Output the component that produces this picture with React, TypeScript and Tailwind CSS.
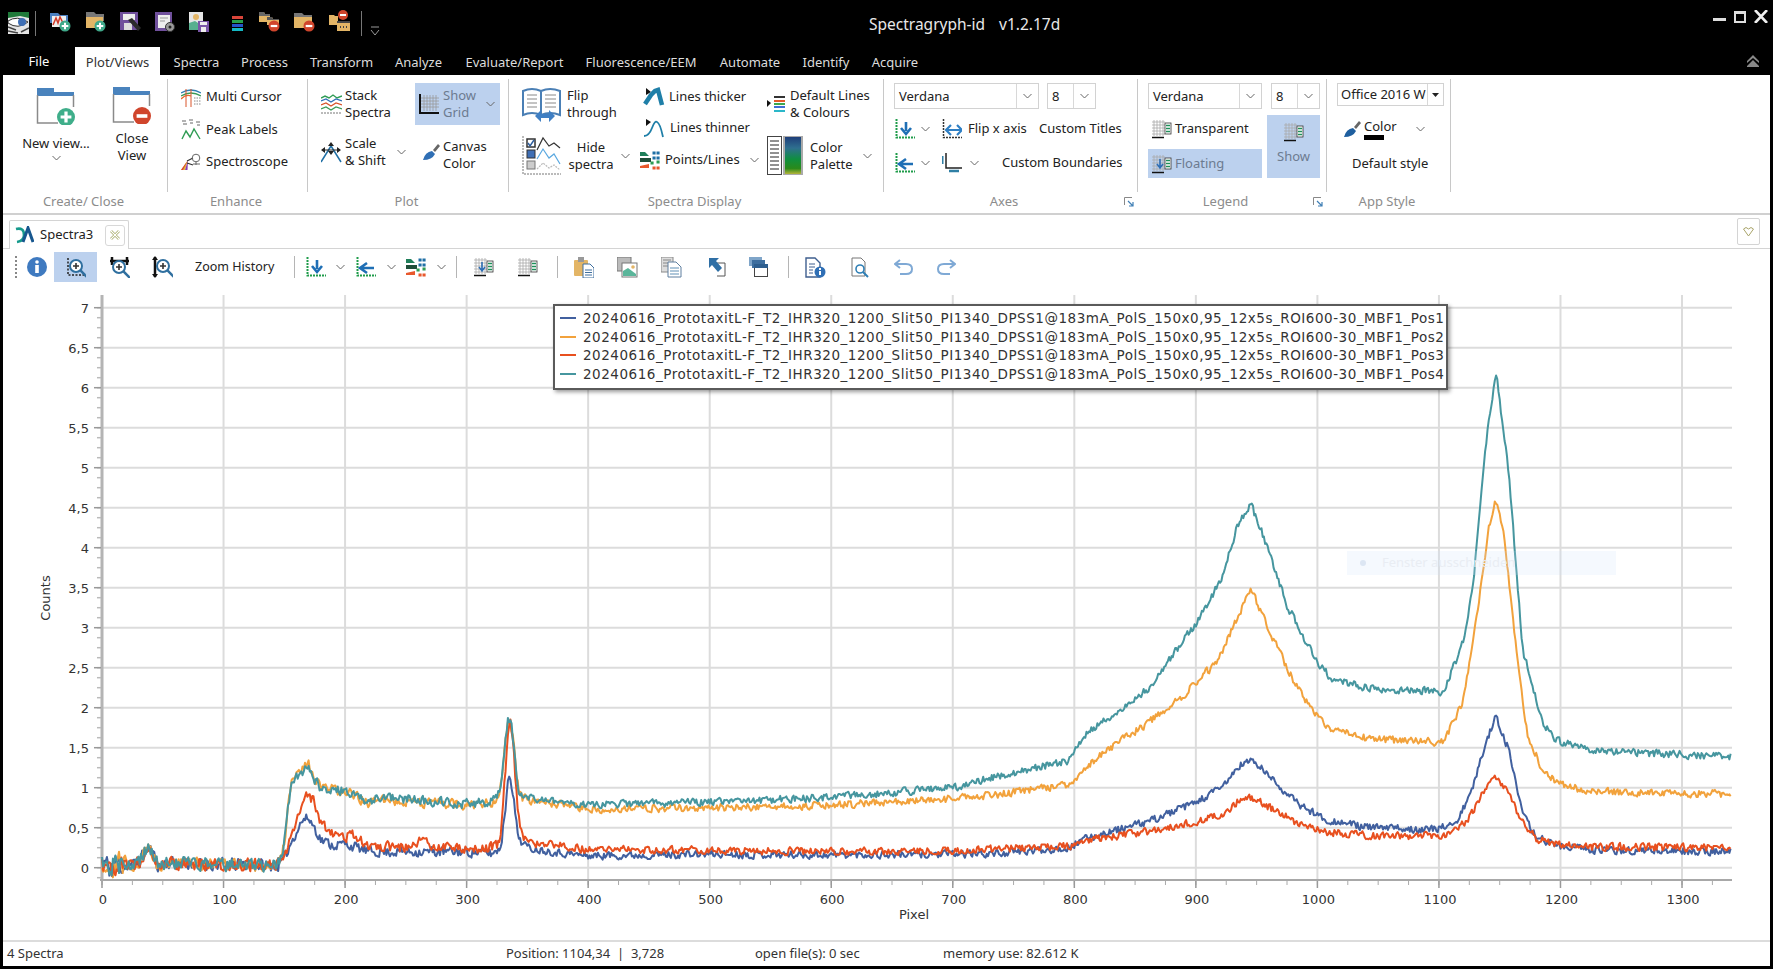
import type { ReactNode } from "react";

const S = ({ w, h, children }: { w: number; h: number; children?: ReactNode }) => (
  <svg width={w} height={h} viewBox={`0 0 ${w} ${h}`} className="block shrink-0">
    {children}
  </svg>
);

const Chevron = ({ color = "#666" }: { color?: string }) => (
  <S w={9} h={6}>
    <path d="M0.5 1 L4.5 5 L8.5 1" fill="none" stroke={color} strokeWidth="1" />
  </S>
);

/* ---------- quick access icons ---------- */
const Plus = ({ cx, cy, r, fill = "#3fa98a" }: { cx: number; cy: number; r: number; fill?: string }) => (
  <g>
    <circle cx={cx} cy={cy} r={r} fill={fill} />
    <path d={`M${cx - r * 0.6} ${cy}H${cx + r * 0.6}M${cx} ${cy - r * 0.6}V${cy + r * 0.6}`} stroke="#fff" strokeWidth={r * 0.36} />
  </g>
);
const Minus = ({ cx, cy, r }: { cx: number; cy: number; r: number }) => (
  <g>
    <circle cx={cx} cy={cy} r={r} fill="#d0452c" />
    <path d={`M${cx - r * 0.6} ${cy}H${cx + r * 0.6}`} stroke="#fff" strokeWidth={r * 0.4} />
  </g>
);

const QEye = () => (
  <S w={21} h={22}>
    <rect x="0" y="0" width="21" height="22" fill="#e6e6e6" />
    <path d="M0 0H21V6L12 4L0 6Z" fill="#1f7a3a" />
    <path d="M0 9Q9 3 20 10Q10 18 0 11Z" fill="#fff" stroke="#333" />
    <circle cx="14" cy="10" r="4" fill="#3f6fb5" />
    <path d="M0 15L8 18M0 19L10 21M13 20L21 16" stroke="#444" strokeWidth="1.5" />
  </S>
);
const QNewSpec = () => (
  <S w={22} h={21}>
    <path d="M0 2H8L10 4H18V12H0Z" fill="#4a7fc0" />
    <rect x="2" y="5" width="14" height="11" fill="#eee" />
    <path d="M3 14L6 7L8 12L10 6L13 12" fill="none" stroke="#d03a2a" strokeWidth="1.5" />
    <Plus cx={15} cy={15} r={5.5} />
  </S>
);
const QFolderAdd = () => (
  <S w={22} h={21}>
    <path d="M1 1H9L11 3H19V10H1Z" fill="#777" />
    <path d="M1 6H18V17H1Z" fill="#e3b566" />
    <Plus cx={15} cy={15} r={5.5} />
  </S>
);
const QFloppyPen = () => (
  <S w={22} h={22}>
    <rect x="0" y="1" width="18" height="18" fill="#70509c" />
    <rect x="3" y="3" width="12" height="6" fill="#eee" />
    <rect x="4" y="12" width="8" height="7" fill="#ddd" />
    <path d="M8 9L12 7L21 17L18 20Z" fill="#2b2b2b" />
  </S>
);
const QDocGear = () => (
  <S w={21} h={22}>
    <rect x="0" y="1" width="17" height="19" fill="#70509c" />
    <rect x="3" y="4" width="12" height="13" fill="#eee" />
    <path d="M5 7H13M5 10H10" stroke="#999" />
    <circle cx="15" cy="16" r="4.5" fill="#999" stroke="#333" strokeWidth="1" />
    <circle cx="15" cy="16" r="1.5" fill="#222" />
  </S>
);
const QPicFloppy = () => (
  <S w={20} h={21}>
    <rect x="0" y="1" width="14" height="18" fill="#e6e6e6" />
    <circle cx="7" cy="6" r="3" fill="#e3b566" />
    <path d="M0 19V12L6 10L12 14V19Z" fill="#57b08f" />
    <rect x="9" y="10" width="11" height="11" fill="#7a56a8" />
    <rect x="11" y="11" width="7" height="3" fill="#eee" />
    <rect x="12" y="16" width="5" height="5" fill="#eee" />
  </S>
);
const QBars = () => (
  <S w={11} h={15}>
    <rect y="0" width="11" height="3" fill="#d9453a" />
    <rect y="4" width="11" height="3" fill="#27a04a" />
    <rect y="8" width="11" height="3" fill="#2453c9" />
    <rect y="12" width="11" height="3" fill="#14b8c4" />
  </S>
);
const QFoldersMinus = () => (
  <S w={21} h={21}>
    <path d="M0 1H5L6 3H11V11H0Z" fill="#e3b566" />
    <path d="M0 1H5L6 3H11V5H0Z" fill="#666" />
    <path d="M8 6H13L14 8H20V14H8Z" fill="#e3b566" />
    <path d="M8 6H13L14 8H20V9H8Z" fill="#555" />
    <Minus cx={15} cy={15} r={5.5} />
  </S>
);
const QFolderMinus = () => (
  <S w={21} h={21}>
    <path d="M0 2H8L10 4H18V9H0Z" fill="#777" />
    <path d="M0 6H18V17H0Z" fill="#e3b566" />
    <Minus cx={15} cy={15} r={5.5} />
  </S>
);
const QBoxMinus = () => (
  <S w={21} h={22}>
    <path d="M0 5H5L6 6H9V15H0Z" fill="#e3b566" />
    <rect x="8" y="11" width="13" height="10" fill="#e3b566" />
    <path d="M8 11H21V13H8Z" fill="#444" />
    <path d="M11 17H12M14 17H15M17 17H18" stroke="#444" strokeWidth="2" />
    <Minus cx={14} cy={5} r={5} />
  </S>
);

/* ---------- ribbon icons ---------- */
const BigFolder = ({ add }: { add?: boolean }) => (
  <S w={40} h={38}>
    <rect x="1" y="1" width="17" height="5" fill="#4a83bd" />
    <rect x="1" y="5" width="37" height="4" fill="#4a83bd" />
    <path d="M1.5 8V36H22M37.5 8V20" fill="none" stroke="#8a8a8a" strokeWidth="1.5" />
    {add ? <Plus cx={30} cy={30} r={9} fill="#3fae8a" /> : <Minus cx={30} cy={30} r={9} />}
  </S>
);
const MultiCursorIcon = () => (
  <S w={20} h={19}>
    <path d="M0 5Q10 -1 20 5" fill="none" stroke="#2f7fb5" strokeWidth="1.3" />
    <path d="M0 8Q10 2 20 8" fill="none" stroke="#3a9a57" strokeWidth="1.3" />
    <path d="M0 11Q5 6 10 8" fill="none" stroke="#e8682c" strokeWidth="1.3" />
    <path d="M5 1V19M10 1V19" stroke="#d9542a" strokeWidth="1" />
    <path d="M13 10H20M13 13H20M13 16H20" stroke="#888" strokeDasharray="1.5 1" />
  </S>
);
const PeakLabelsIcon = () => (
  <S w={20} h={21}>
    <path d="M1 2H5M2 5H6M8 1H12M9 4H12M15 3H19M16 6H19" stroke="#666" />
    <path d="M1 20L5 12L9 18L13 10L19 20" fill="none" stroke="#2f9c54" strokeWidth="1.4" />
  </S>
);
const SpectroscopeIcon = () => (
  <S w={20} h={18}>
    <path d="M0 17L7 7L4 17Z" fill="#e6c030" />
    <path d="M0 17L7 7L2 17Z" fill="#d9453a" />
    <path d="M4 17L7 7L6.5 17Z" fill="#8a3fb5" />
    <path d="M6 8L12 5M6 10L12 12" stroke="#333" strokeWidth="1.2" />
    <circle cx="15" cy="5" r="3.8" fill="none" stroke="#666" />
    <path d="M12 11H19M15 9V12" stroke="#666" />
  </S>
);
const StackIcon = () => (
  <S w={21} h={20}>
    <path d="M0 4L4 2L8 4L12 1L16 4L21 2" fill="none" stroke="#2f9c54" strokeWidth="1.4" />
    <path d="M0 7L5 5L10 8L15 5L21 7" fill="none" stroke="#2f6fb5" strokeWidth="1.3" />
    <path d="M0 11L5 9L10 12L15 9L21 11" fill="none" stroke="#d9542a" strokeWidth="1.3" />
    <path d="M0 15L5 13L10 16L15 13L21 15" fill="none" stroke="#3a9a57" strokeWidth="1.3" />
    <path d="M0 19H21" stroke="#777" strokeDasharray="2 1" />
  </S>
);
const GridIcon = () => (
  <S w={20} h={20}>
    <path d="M5 1V17M8 1V17M11 1V17M14 1V17M17 1V17M2 4H20M2 7H20M2 10H20M2 13H20" stroke="#9a9a9a" strokeWidth="0.8" />
    <path d="M1 0V19H20" fill="none" stroke="#111" strokeWidth="2" />
  </S>
);
const ScaleIcon = () => (
  <S w={21} h={21}>
    <path d="M0 20L10 4L20 20" fill="none" stroke="#1f6fa5" strokeWidth="1.5" />
    <path d="M10 0L7 4H13ZM10 13L7 9H13ZM0 8L4 5V11ZM20 8L16 5V11Z" fill="#222" />
    <path d="M4 8H16" stroke="#222" />
  </S>
);
const BrushIcon = ({ c = "#2f6fb5" }: { c?: string }) => (
  <S w={18} h={18}>
    <path d="M0 17Q2 9 9 8L12 11Q9 17 0 17Z" fill={c} />
    <path d="M10 7L15 1L17 3L12 9Z" fill="#666" />
  </S>
);
const BookIcon = () => (
  <S w={40} h={36}>
    <path d="M1 4Q10 0 19 4V28Q10 24 1 28Z" fill="#fff" stroke="#4a7fb5" strokeWidth="2" />
    <path d="M19 4Q28 0 38 4V28Q28 24 19 28Z" fill="#fff" stroke="#4a7fb5" strokeWidth="2" />
    <path d="M5 8H15M5 12H15M5 16H15M5 20H15M23 8H34M23 12H34M23 16H34M23 20H34" stroke="#888" />
    <path d="M13 29L19 23V27H27V23L33 29L27 35V31H19V35Z" fill="#3f7fc4" />
  </S>
);
const HideIcon = () => (
  <S w={39} h={39}>
    <rect x="5" y="3" width="8" height="8" fill="#fff" stroke="#333" strokeWidth="1.5" />
    <path d="M6 7L8 10L12 4" fill="none" stroke="#2f5f9f" strokeWidth="1.5" />
    <rect x="5" y="14" width="8" height="8" fill="#3f6fb5" stroke="#333" />
    <rect x="5" y="25" width="8" height="8" fill="#ccc" stroke="#777" />
    <path d="M15 14L21 2L27 10L32 7L38 12" fill="none" stroke="#333" strokeWidth="1.2" />
    <path d="M15 23L21 13L27 22L32 18L38 28" fill="none" stroke="#5aa8e0" strokeWidth="1.2" />
    <path d="M15 33L21 27L27 32L32 29L38 34" fill="none" stroke="#bbb" strokeWidth="1.2" strokeDasharray="2 1" />
    <path d="M1 0V38H39" fill="none" stroke="#777" strokeDasharray="2 1" />
  </S>
);
const LinesThickIcon = () => (
  <S w={22} h={20}>
    <path d="M3 1L8 5L3 8Z" fill="#111" />
    <path d="M2 17L8 8L12 4L15 3L19 18" fill="none" stroke="#1f7fa8" strokeWidth="4.5" />
  </S>
);
const LinesThinIcon = () => (
  <S w={22} h={19}>
    <path d="M3 0L8 3L3 7Z" fill="#111" />
    <path d="M1 17Q6 17 9 9T14 3Q17 4 20 18" fill="none" stroke="#1f7fa8" strokeWidth="1.8" />
  </S>
);
const PointsIcon = () => (
  <S w={20} h={20}>
    <path d="M0 2L5 2L9 6L0 6Z" fill="#1f7f5a" />
    <path d="M0 8H11V12H0Z" fill="#1f4f3a" />
    <path d="M0 16L9 14V18H0Z" fill="#e8582c" />
    <path d="M14 3H14.1M18 3H18.1M14 8H14.1M18 8H18.1" stroke="#1f6fa5" strokeWidth="3" strokeLinecap="square" />
    <path d="M12 13H12.1M18 12H18.1" stroke="#2f9c54" strokeWidth="3" strokeLinecap="square" />
    <path d="M14 18H14.1M18 18H18.1" stroke="#e8582c" strokeWidth="3" strokeLinecap="square" />
  </S>
);
const DefaultLinesIcon = () => (
  <S w={19} h={18}>
    <path d="M0 5L4 8L0 12Z" fill="#111" />
    <rect x="7" y="1" width="11" height="2" fill="#333" />
    <rect x="7" y="5" width="11" height="2" fill="#e65a2c" />
    <rect x="7" y="8" width="11" height="2" fill="#3da84f" />
    <rect x="7" y="11" width="11" height="2" fill="#3f6fd5" />
    <rect x="7" y="15" width="11" height="2" fill="#2bb7c9" />
  </S>
);
const PaletteIcon = () => (
  <S w={36} h={39}>
    <defs>
      <linearGradient id="pal" x1="0" y1="0" x2="0" y2="1">
        <stop offset="0" stopColor="#1f3f7a" />
        <stop offset="0.3" stopColor="#2f6f8f" />
        <stop offset="0.6" stopColor="#0f8f3f" />
        <stop offset="0.85" stopColor="#2a8a1a" />
        <stop offset="1" stopColor="#b5b53a" />
      </linearGradient>
    </defs>
    <rect x="0.5" y="0.5" width="14" height="38" fill="#fff" stroke="#444" />
    <path d="M3 5H12M3 9H12M3 13H12M3 17H12M3 21H12M3 25H12M3 29H12M3 33H12" stroke="#222" />
    <rect x="16" y="0" width="20" height="39" fill="#aaa" />
    <rect x="18" y="1" width="16" height="37" fill="url(#pal)" />
  </S>
);
const AxisBase = () => (
  <path d="M1.5 0V18.5H20" fill="none" stroke="#1f9c4a" strokeWidth="2" strokeDasharray="2 1" />
);
const AxDown = () => (
  <S w={20} h={20}>
    <AxisBase />
    <path d="M11 3V12M6 9L11 15L16 9" fill="none" stroke="#1f6fb5" strokeWidth="2.6" />
  </S>
);
const AxLeft = () => (
  <S w={20} h={20}>
    <AxisBase />
    <path d="M18 11H6M11 6L4 11L11 16" fill="none" stroke="#1f6fb5" strokeWidth="2.6" />
  </S>
);
const FlipX = () => (
  <S w={20} h={20}>
    <path d="M1.5 0V18.5H20" fill="none" stroke="#333" strokeWidth="1.5" strokeDasharray="2 1" />
    <path d="M5 11H19M9 6L4 11L9 16M15 6L20 11L15 16" fill="none" stroke="#2f7fc4" strokeWidth="2.2" />
  </S>
);
const Boundaries = () => (
  <S w={20} h={20}>
    <path d="M4 0V15H20" fill="none" stroke="#222" strokeWidth="1.5" />
    <path d="M0 3V11" stroke="#2f7fa5" strokeWidth="3" />
    <path d="M7 18H17" stroke="#2f7fa5" strokeWidth="2.5" />
  </S>
);
const LegendGrid = ({ arrow }: { arrow?: boolean }) => (
  <S w={20} h={20}>
    <path d="M2 1V17M5 1V17M8 1V17M11 1V17M0 3H13M0 6H13M0 9H13M0 12H13M0 15H13" stroke="#aaa" strokeWidth="0.8" />
    <path d="M0 18.5H12" stroke="#111" strokeWidth="1.5" />
    <rect x="13" y="4" width="6" height="11" fill="#fff" stroke="#333" strokeWidth="0.8" />
    <path d="M14 6.5H18M14 9.5H18M14 12.5H18" stroke="#1f8f5a" strokeWidth="1.6" />
    {arrow && <path d="M8 5V13M5 10L8 14L11 10" fill="none" stroke="#2f6fb5" strokeWidth="1.6" />}
  </S>
);
const Launcher = () => (
  <S w={10} h={10}>
    <path d="M0.5 8V0.5H8" fill="none" stroke="#888" />
    <path d="M4 4L9 9M9 5V9H5" fill="none" stroke="#3f7fb5" strokeWidth="1.2" />
  </S>
);

/* ---------- toolbar icons ---------- */
const Mag = ({ cx, cy, r }: { cx: number; cy: number; r: number }) => (
  <g>
    <circle cx={cx} cy={cy} r={r} fill="#fff" stroke="#2f6f9f" strokeWidth="2" />
    <path d={`M${cx + r * 0.7} ${cy + r * 0.7}L${cx + r + 5} ${cy + r + 5}`} stroke="#2f6f9f" strokeWidth="2.5" />
    <path d={`M${cx - 3} ${cy}H${cx + 3}M${cx} ${cy - 3}V${cy + 3}`} stroke="#333" strokeWidth="1.6" />
  </g>
);
const InfoIcon = () => (
  <S w={20} h={20}>
    <circle cx="10" cy="10" r="10" fill="#3f7ac0" />
    <circle cx="10" cy="5" r="1.8" fill="#fff" />
    <rect x="8.2" y="8" width="3.6" height="8" fill="#fff" />
  </S>
);
const ZoomBox = () => (
  <S w={20} h={21}>
    <path d="M2 1V18H19" fill="none" stroke="#222" strokeWidth="1.5" strokeDasharray="2 1.5" />
    <Mag cx={10} cy={9} r={6} />
  </S>
);
const ZoomH = () => (
  <S w={21} h={21}>
    <path d="M1 4H20" stroke="#111" strokeWidth="2.5" />
    <path d="M3 0V8M18 0V8" stroke="#111" strokeWidth="2.5" />
    <Mag cx={10} cy={10} r={6} />
  </S>
);
const ZoomV = () => (
  <S w={21} h={22}>
    <path d="M3 1V21" stroke="#111" strokeWidth="2.5" />
    <path d="M0 4L3 0L6 4ZM0 18L3 22L6 18Z" fill="#111" />
    <Mag cx={11} cy={10} r={6} />
  </S>
);
const ClipIcon = () => (
  <S w={20} h={21}>
    <rect x="0" y="3" width="14" height="16" rx="1" fill="#e3b566" />
    <rect x="4" y="0" width="6" height="5" fill="#999" />
    <path d="M9 7H16L20 11V21H9Z" fill="#fff" stroke="#3f6f9f" />
    <path d="M11 13H18M11 15.5H18M11 18H18" stroke="#3f6f9f" />
  </S>
);
const ImgIcon = () => (
  <S w={21} h={21}>
    <rect x="0" y="0" width="14" height="14" fill="#bbb" stroke="#777" />
    <rect x="5" y="6" width="15" height="14" fill="#fff" stroke="#777" />
    <path d="M6 19V14L11 11L19 17V19Z" fill="#5ab59a" />
    <circle cx="16" cy="10" r="1.8" fill="#e3b566" />
  </S>
);
const DocsIcon = () => (
  <S w={21} h={21}>
    <rect x="0" y="0" width="12" height="15" fill="#ddd" stroke="#888" />
    <path d="M2 3H10M2 6H10M2 9H10" stroke="#888" />
    <path d="M7 5H15L20 10V20H7Z" fill="#fff" stroke="#5f7f9f" />
    <path d="M9 11H18M9 14H18M9 17H18" stroke="#5f8fb5" />
  </S>
);
const ArrowOut = () => (
  <S w={18} h={20}>
    <path d="M5 6H17V19H9" fill="#fff" stroke="#555" />
    <path d="M1 1H11L8 4L14 11L10 15L4 8L1 11Z" fill="#2f6fa5" />
  </S>
);
const WinsIcon = () => (
  <S w={19} h={20}>
    <rect x="0" y="0" width="13" height="9" fill="#7fa5c9" />
    <rect x="3" y="3" width="13" height="8" fill="#3f6f9f" />
    <rect x="5.5" y="7.5" width="13" height="12" fill="#fff" stroke="#444" />
    <rect x="5" y="7" width="14" height="4" fill="#2f5f8f" />
  </S>
);
const DocInfo = () => (
  <S w={21} h={21}>
    <path d="M1 1H10L15 6V20H1Z" fill="#fff" stroke="#3f5f8f" strokeWidth="1.4" />
    <path d="M4 7H10M4 10H10M4 13H8M4 16H8" stroke="#3f5f8f" />
    <circle cx="15" cy="15" r="5.5" fill="#2f6fb5" />
    <rect x="14" y="14" width="2" height="4" fill="#fff" />
    <rect x="14" y="11" width="2" height="2" fill="#fff" />
  </S>
);
const DocSearch = () => (
  <S w={18} h={21}>
    <path d="M1 1H10L14 5V19H1Z" fill="#fff" stroke="#777" />
    <circle cx="9" cy="12" r="4" fill="#fff" stroke="#2f7fb5" strokeWidth="1.6" />
    <path d="M12 15L17 20" stroke="#2f7fb5" strokeWidth="2" />
  </S>
);
const Undo = ({ flip }: { flip?: boolean }) => (
  <S w={19} h={17}>
    <g transform={flip ? "translate(19 0) scale(-1 1)" : undefined}>
      <path d="M6 1L1 5L6 9" fill="none" stroke="#7fa9d5" strokeWidth="2" />
      <path d="M2 5H12Q18 5 18 10T12 15H6" fill="none" stroke="#7fa9d5" strokeWidth="2" />
    </g>
  </S>
);
const Sep = () => <div className="h-[22px] w-px bg-[#b5b5b5]" />;

/* ---------- chart data ---------- */
type Pt = [number, number];

const BASE: Pt[] = [
  [0, 0.08], [6, 0.0], [12, 0.06], [20, 0.03], [30, 0.05], [35, 0.2], [38, 0.26], [42, 0.17], [47, 0.0],
  [52, 0.06], [100, 0.04], [145, 0.03],
];

const BLUE: Pt[] = [
  ...BASE, [150, 0.1], [155, 0.3], [160, 0.45], [165, 0.6], [170, 0.62], [175, 0.5], [180, 0.35], [190, 0.28], [200, 0.3],
  [210, 0.25], [220, 0.2], [300, 0.2], [322, 0.18], [328, 0.25], [332, 0.75], [335, 1.27], [338, 0.95], [342, 0.4], [350, 0.25],
  [380, 0.18], [400, 0.15], [500, 0.17], [600, 0.16], [700, 0.17], [739, 0.18], [795, 0.25], [812, 0.38], [860, 0.57], [901, 0.82],
  [921, 1.0], [937, 1.29], [947, 1.34], [962, 1.12], [982, 0.82], [1007, 0.6], [1043, 0.5], [1100, 0.48], [1116, 0.6], [1128, 1.0],
  [1138, 1.54], [1147, 1.9], [1157, 1.49], [1169, 0.65], [1181, 0.38], [1197, 0.28], [1226, 0.22], [1340, 0.2],
];
const RED: Pt[] = [
  ...BASE, [150, 0.12], [155, 0.35], [160, 0.6], [165, 0.85], [170, 0.93], [175, 0.8], [180, 0.55], [190, 0.42], [200, 0.38], [205, 0.42],
  [210, 0.38], [220, 0.27], [255, 0.25], [262, 0.35], [270, 0.3], [280, 0.25], [320, 0.25], [327, 0.3], [331, 1.0], [335, 1.95],
  [338, 1.65], [342, 0.7], [346, 0.4], [355, 0.3], [365, 0.3], [400, 0.23], [500, 0.22], [600, 0.2], [700, 0.21], [760, 0.25],
  [795, 0.27], [812, 0.35], [860, 0.45], [901, 0.57], [921, 0.67], [937, 0.85], [947, 0.87], [962, 0.74], [982, 0.57], [1007, 0.45],
  [1043, 0.4], [1100, 0.4], [1116, 0.47], [1128, 0.7], [1138, 1.0], [1147, 1.14], [1157, 0.95], [1169, 0.55], [1181, 0.35], [1197, 0.3],
  [1226, 0.26], [1340, 0.25],
];
const ORANGE: Pt[] = [
  ...BASE, [150, 0.3], [155, 1.02], [160, 1.15], [165, 1.22], [170, 1.3], [175, 1.1], [180, 1.0], [200, 0.95], [210, 0.88], [220, 0.8],
  [230, 0.86], [300, 0.78], [322, 0.82], [328, 1.0], [332, 1.6], [335, 1.95], [338, 1.65], [342, 1.0], [346, 0.85], [380, 0.78],
  [400, 0.73], [500, 0.75], [600, 0.78], [700, 0.86], [739, 0.92], [795, 1.04], [820, 1.39], [881, 2.03], [901, 2.33], [917, 2.57],
  [934, 3.11], [945, 3.49], [962, 2.92], [982, 2.28], [998, 1.93], [1009, 1.73], [1043, 1.61], [1104, 1.57], [1120, 2.08], [1132, 3.26],
  [1141, 4.25], [1146, 4.6], [1153, 4.25], [1165, 2.52], [1173, 1.63], [1185, 1.24], [1199, 1.04], [1226, 0.95], [1340, 0.92],
];
const TEAL: Pt[] = [
  ...BASE, [150, 0.3], [155, 1.0], [160, 1.15], [165, 1.2], [170, 1.27], [175, 1.1], [180, 1.0], [200, 0.95], [210, 0.9], [220, 0.82],
  [230, 0.88], [300, 0.8], [322, 0.83], [328, 1.0], [332, 1.6], [335, 1.93], [338, 1.65], [342, 1.0], [346, 0.88], [380, 0.8],
  [400, 0.79], [500, 0.82], [600, 0.88], [700, 1.0], [739, 1.15], [795, 1.34], [812, 1.71], [860, 2.23], [901, 3.07], [921, 3.6],
  [934, 4.26], [945, 4.55], [958, 4.05], [974, 3.31], [998, 2.62], [1011, 2.37], [1040, 2.25], [1104, 2.2], [1120, 2.82], [1128, 3.5],
  [1138, 5.24], [1147, 6.2], [1157, 5.0], [1169, 2.72], [1185, 1.83], [1197, 1.59], [1226, 1.46], [1340, 1.39],
];

const X0 = 102;
const PX = 1.2154;
const Y0 = 867.7;
const PY = 80;
const xAt = (d: number) => X0 + d * PX;
const yAt = (v: number) => Y0 - v * PY;

function buildPath(points: Pt[], seed: number) {
  let s = seed;
  const rnd = () => {
    s = (s + 0x6d2b79f5) | 0;
    let t = Math.imul(s ^ (s >>> 15), 1 | s);
    t = (t + Math.imul(t ^ (t >>> 7), 61 | t)) ^ t;
    return ((t ^ (t >>> 14)) >>> 0) / 4294967296 - 0.5;
  };
  const raw: number[] = [];
  let j = 0;
  for (let d = 0; d <= 1340; d++) {
    while (j < points.length - 2 && points[j + 1][0] < d) j++;
    const [a, av] = points[j];
    const [b, bv] = points[j + 1];
    raw.push(av + ((bv - av) * (d - a)) / (b - a));
  }
  let out = "";
  let prev = 0;
  for (let d = 0; d <= 1340; d++) {
    const lo = Math.max(0, d - 1);
    const hi = Math.min(1340, d + 1);
    const smooth = (raw[lo] + raw[d] + raw[hi]) / 3;
    const amp = d < 20 ? 0.28 : d < 150 ? 0.15 : d < 350 ? 0.12 : 0.09;
    prev = prev * 0.25 + rnd() * amp;
    out += `${d === 0 ? "M" : "L"}${xAt(d).toFixed(1)} ${yAt(smooth + prev).toFixed(1)}`;
  }
  return out;
}

const SERIES = [
  { d: buildPath(BLUE, 11), c: "#41609f" },
  { d: buildPath(ORANGE, 29), c: "#f2a23c" },
  { d: buildPath(RED, 47), c: "#e8501f" },
  { d: buildPath(TEAL, 83), c: "#46969f" },
];

const X_TICKS = Array.from({ length: 14 }, (_, i) => i * 100);
const X_MINOR = Array.from({ length: 54 }, (_, i) => i * 25);
const Y_LABELS = ["0", "0,5", "1", "1,5", "2", "2,5", "3", "3,5", "4", "4,5", "5", "5,5", "6", "6,5", "7"];
const Y_MINOR = Array.from({ length: 58 }, (_, i) => i * 0.125 - 0.125);

const LEGEND_NAME = "20240616_PrototaxitL-F_T2_IHR320_1200_Slit50_PI1340_DPSS1@183mA_PolS_150x0,95_12x5s_ROI600-30_MBF1_Pos";

const Chart = () => (
  <svg width={1767} height={655} viewBox="3 285 1767 655" className="block">
    {X_TICKS.map((t) => (
      <path key={t} d={`M${xAt(t)} 295V880`} stroke="#dcdcdc" strokeWidth="2" />
    ))}
    {Y_LABELS.map((_, i) => (
      <path key={i} d={`M102 ${yAt(i * 0.5)}H1732`} stroke="#dcdcdc" strokeWidth="2" />
    ))}
    <path d="M102 295V881" stroke="#b4b4b4" strokeWidth="3" />
    <path d="M100 880H1732" stroke="#a8a8a8" strokeWidth="2" />
    {Y_MINOR.map((v) => (
      <path key={v} d={`M97 ${yAt(v)}H101`} stroke="#bbb" strokeWidth="1.5" />
    ))}
    {Y_LABELS.map((_, i) => (
      <path key={i} d={`M94 ${yAt(i * 0.5)}H101`} stroke="#999" strokeWidth="1.5" />
    ))}
    {X_MINOR.map((t) => (
      <path key={t} d={`M${xAt(t)} 881V885`} stroke="#aaa" />
    ))}
    {X_TICKS.map((t) => (
      <path key={t} d={`M${xAt(t)} 881V888`} stroke="#999" strokeWidth="1.5" />
    ))}
    {SERIES.map((s) => (
      <path key={s.c} d={s.d} fill="none" stroke={s.c} strokeWidth="2" strokeLinejoin="round" />
    ))}
    <g fontFamily="'DejaVu Sans', sans-serif" fontSize="13" fill="#333">
      {Y_LABELS.map((l, i) => (
        <text key={l} x="89" y={yAt(i * 0.5) + 5} textAnchor="end">
          {l}
        </text>
      ))}
      {X_TICKS.map((t) => (
        <text key={t} x={xAt(t) + 1} y="904" textAnchor="middle">
          {t}
        </text>
      ))}
      <text x="914" y="919" textAnchor="middle">
        Pixel
      </text>
      <text x="0" y="0" textAnchor="middle" transform="translate(50 598) rotate(-90)">
        Counts
      </text>
    </g>
  </svg>
);

/* ---------- ribbon pieces ---------- */
const Group = ({
  className,
  label,
  launcher,
  children,
}: {
  className: string;
  label: string;
  launcher?: boolean;
  children: ReactNode;
}) => (
  <div className={`flex shrink-0 flex-col ${className}`}>
    <div className="h-[113px] border-r border-[#c8c8c8]">{children}</div>
    <div className="flex h-[19px] items-center pr-[4px] pt-[1px] text-[13px] text-[#8c8c8c]">
      <span className="flex-1 text-center">{label}</span>
      {launcher && <Launcher />}
    </div>
  </div>
);

const Combo = ({ className, text, divider }: { className: string; text: string; divider: string }) => (
  <div className={`flex h-[26px] items-center border border-[#d2d2d2] bg-white text-[13px] text-[#222] ${className}`}>
    <span className="flex-1 pl-[4px] pt-[1px]">{text}</span>
    <div className={`flex h-full items-center justify-center border-l border-[#d8d8d8] ${divider}`}>
      <Chevron />
    </div>
  </div>
);

const Two = ({ a, b, className = "" }: { a: string; b: string; className?: string }) => (
  <div className={`leading-[17px] ${className}`}>
    <div>{a}</div>
    <div>{b}</div>
  </div>
);

const TAB_CELLS = [
  { t: "Spectra", w: "w-[73px]" },
  { t: "Process", w: "w-[63px]" },
  { t: "Transform", w: "w-[91px]" },
  { t: "Analyze", w: "w-[63px]" },
  { t: "Evaluate/Report", w: "w-[129px]" },
  { t: "Fluorescence/EEM", w: "w-[124px]" },
  { t: "Automate", w: "w-[94px]" },
  { t: "Identify", w: "w-[58px]" },
  { t: "Acquire", w: "w-[80px]" },
];

export default function App() {
  return (
    <div className="flex h-[969px] w-[1773px] flex-col overflow-hidden bg-black font-['Noto_Sans',sans-serif] text-[13px] text-[#222]">
      {/* title bar */}
      <div className="flex h-[47px] shrink-0 items-start text-white">
        <div className="ml-[8px] mt-[12px]"><QEye /></div>
        <div className="ml-[6px] mt-[11px] h-[25px] w-px bg-[#777]" />
        <div className="ml-[14px] mt-[11px]"><QNewSpec /></div>
        <div className="ml-[13px] mt-[11px]"><QFolderAdd /></div>
        <div className="ml-[13px] mt-[11px]"><QFloppyPen /></div>
        <div className="ml-[13px] mt-[11px]"><QDocGear /></div>
        <div className="ml-[13px] mt-[11px]"><QPicFloppy /></div>
        <div className="ml-[23px] mt-[16px]"><QBars /></div>
        <div className="ml-[16px] mt-[11px]"><QFoldersMinus /></div>
        <div className="ml-[14px] mt-[11px]"><QFolderMinus /></div>
        <div className="ml-[14px] mt-[10px]"><QBoxMinus /></div>
        <div className="ml-[11px] mt-[11px] h-[25px] w-px bg-[#777]" />
        <div className="ml-[8px] mt-[26px]">
          <S w={10} h={10}>
            <path d="M1 1H9M1 4L5 9L9 4" fill="none" stroke="#999" />
          </S>
        </div>
        <div className="ml-[489px] mt-[14px] flex gap-[14px] text-[15.5px] leading-[20px] text-[#e8e8e8]">
          <span>Spectragryph-id</span>
          <span>v1.2.17d</span>
        </div>
        <div className="ml-auto mr-[5px] mt-[10px] flex items-end gap-[8px]">
          <div className="mb-[2px] h-[3px] w-[13px] bg-[#ddd]" />
          <div className="h-[12px] w-[12px] border-2 border-t-[3px] border-[#ddd]" />
          <S w={14} h={13}>
            <path d="M1 0L13 13M13 0L1 13" stroke="#eee" strokeWidth="2.6" />
          </S>
        </div>
      </div>

      {/* tabs */}
      <div className="flex h-[28px] shrink-0 items-stretch pl-[3px] text-[#dcdcdc]">
        <div className="flex w-[72px] items-center justify-center pt-[1px] text-white">File</div>
        <div className="flex w-[85px] items-center justify-center bg-white pt-[3px] text-[#333]">Plot/Views</div>
        {TAB_CELLS.map((c) => (
          <div key={c.t} className={`flex items-center justify-center pt-[3px] ${c.w}`}>
            {c.t}
          </div>
        ))}
        <div className="ml-auto mr-[14px] self-center">
          <S w={12} h={12}>
            <path d="M0 6L6 0L12 6V8L6 3L0 8ZM0 11L6 5L12 11V12H0Z" fill="#888" />
          </S>
        </div>
      </div>

      {/* content window */}
      <div className="mx-[3px] flex min-h-0 flex-1 flex-col bg-white">
        {/* ribbon */}
        <div className="flex h-[140px] shrink-0 border-b-2 border-[#d0d0d0] pt-[4px]">
          <Group className="w-[165px]" label="Create/ Close">
            <div className="flex">
              <div className="ml-[17px] flex w-[72px] flex-col items-center pt-[8px]">
                <BigFolder add />
                <div className="mt-[10px] leading-[17px]">New view...</div>
                <div className="mt-[3px]"><Chevron /></div>
              </div>
              <div className="ml-[9px] flex w-[62px] flex-col items-center pt-[7px]">
                <BigFolder />
                <Two a="Close" b="View" className="mt-[6px] text-center" />
              </div>
            </div>
          </Group>

          <Group className="w-[140px]" label="Enhance">
            <div className="flex flex-col pl-[13px] pt-[2px]">
              <div className="flex h-[32px] items-center gap-[5px]"><MultiCursorIcon />Multi Cursor</div>
              <div className="flex h-[33px] items-center gap-[5px]"><PeakLabelsIcon />Peak Labels</div>
              <div className="flex h-[32px] items-center gap-[5px]"><SpectroscopeIcon />Spectroscope</div>
            </div>
          </Group>

          <Group className="w-[201px]" label="Plot">
            <div className="mt-[4px] flex h-[42px]">
              <div className="flex w-[107px] items-center gap-[3px] pl-[13px]">
                <StackIcon />
                <Two a="Stack" b="Spectra" />
              </div>
              <div className="flex w-[85px] items-center bg-[#bcd1ee] pl-[4px] text-[#6c7b90]">
                <GridIcon />
                <Two a="Show" b="Grid" className="ml-[4px] flex-1" />
                <div className="mr-[5px]"><Chevron /></div>
              </div>
            </div>
            <div className="mt-[6px] flex h-[42px]">
              <div className="flex w-[107px] items-center gap-[3px] pl-[13px]">
                <ScaleIcon />
                <Two a="Scale" b="& Shift" className="flex-1" />
                <div className="mr-[9px]"><Chevron /></div>
              </div>
              <div className="flex w-[85px] items-center pl-[8px]">
                <BrushIcon />
                <Two a="Canvas" b="Color" className="ml-[2px] mt-[6px]" />
              </div>
            </div>
          </Group>

          <Group className="w-[375px]" label="Spectra Display">
            <div className="flex pl-[13px]">
              <div className="w-[118px]">
                <div className="mt-[8px] flex items-start gap-[5px]">
                  <BookIcon />
                  <Two a="Flip" b="through" />
                </div>
                <div className="mt-[13px] flex items-center">
                  <HideIcon />
                  <Two a="Hide" b="spectra" className="ml-[5px] w-[50px] text-center" />
                  <div className="ml-[5px]"><Chevron /></div>
                </div>
              </div>
              <div className="w-[127px]">
                <div className="ml-[3px] mt-[8px] flex h-[20px] items-center gap-[4px]"><LinesThickIcon />Lines thicker</div>
                <div className="ml-[3px] mt-[11px] flex h-[20px] items-center gap-[5px]"><LinesThinIcon />Lines thinner</div>
                <div className="mt-[12px] flex h-[20px] items-center gap-[5px]">
                  <PointsIcon />
                  <span className="w-[80px]">Points/Lines</span>
                  <Chevron />
                </div>
              </div>
              <div className="flex-1">
                <div className="mt-[8px] flex items-center gap-[4px]">
                  <DefaultLinesIcon />
                  <Two a="Default Lines" b="& Colours" />
                </div>
                <div className="mt-[15px] flex items-center">
                  <PaletteIcon />
                  <Two a="Color" b="Palette" className="ml-[7px] w-[53px]" />
                  <Chevron />
                </div>
              </div>
            </div>
          </Group>

          <Group className="w-[254px]" label="Axes" launcher>
            <div className="pl-[10px] pt-[4px]">
              <div className="flex gap-[8px]">
                <Combo className="w-[145px]" text="Verdana" divider="w-[22px]" />
                <Combo className="w-[49px]" text="8" divider="w-[22px]" />
              </div>
              <div className="mt-[8px] flex h-[24px] items-center">
                <div className="flex w-[48px] items-center gap-[6px] pl-[1px]"><AxDown /><Chevron /></div>
                <div className="flex w-[97px] items-center gap-[6px]"><FlipX />Flip x axis</div>
                <span>Custom Titles</span>
              </div>
              <div className="mt-[10px] flex h-[24px] items-center">
                <div className="flex w-[48px] items-center gap-[6px] pl-[1px]"><AxLeft /><Chevron /></div>
                <div className="flex w-[60px] items-center gap-[8px]"><Boundaries /><Chevron /></div>
                <span>Custom Boundaries</span>
              </div>
            </div>
          </Group>

          <Group className="w-[189px]" label="Legend" launcher>
            <div className="pl-[10px] pt-[4px]">
              <div className="flex gap-[9px]">
                <Combo className="w-[114px]" text="Verdana" divider="w-[22px]" />
                <Combo className="w-[49px]" text="8" divider="w-[22px]" />
              </div>
              <div className="mt-[6px] flex gap-[5px]">
                <div className="w-[114px]">
                  <div className="flex h-[28px] items-center gap-[3px] pl-[4px]"><LegendGrid />Transparent</div>
                  <div className="mt-[6px] flex h-[29px] items-center gap-[3px] bg-[#bcd1ee] pl-[4px] text-[#6c7b90]"><LegendGrid arrow />Floating</div>
                </div>
                <div className="flex h-[63px] w-[53px] flex-col items-center bg-[#bcd1ee] pt-[7px] text-[#6c7b90]">
                  <LegendGrid />
                  <div className="mt-[6px] leading-[17px]">Show</div>
                </div>
              </div>
            </div>
          </Group>

          <Group className="w-[124px]" label="App Style">
            <div className="pl-[10px] pt-[4px]">
              <div className="flex h-[23px] w-[107px] items-center border border-[#d2d2d2]">
                <span className="flex-1 overflow-hidden whitespace-nowrap pl-[3px]">Office 2016 W</span>
                <div className="flex h-full w-[16px] items-center justify-center border-l border-[#d8d8d8]">
                  <S w={7} h={4}>
                    <path d="M0 0H7L3.5 4Z" fill="#222" />
                  </S>
                </div>
              </div>
              <div className="ml-[7px] mt-[11px] flex h-[24px] items-center">
                <BrushIcon c="#1f5f9f" />
                <div className="ml-[2px] w-[36px] leading-[17px]">
                  Color
                  <div className="h-[5px] w-[20px] bg-black" />
                </div>
                <div className="ml-[16px]"><Chevron /></div>
              </div>
              <div className="ml-[15px] mt-[14px] leading-[17px]">Default style</div>
            </div>
          </Group>
        </div>

        {/* doc tab strip */}
        <div className="flex h-[34px] shrink-0 items-end border-b border-[#d4d4d4]">
          <div className="-mb-px ml-[6px] flex h-[29px] w-[120px] items-center rounded-t-[2px] border border-b-0 border-[#d4d4d4] bg-white pl-[4px]">
            <S w={20} h={18}>
              <path d="M2 3Q10 1 10 9Q10 15 3 16" fill="none" stroke="#159a8c" strokeWidth="2.6" />
              <path d="M9 16L14 2L19 16" fill="none" stroke="#17578f" strokeWidth="3" />
            </S>
            <span className="ml-[6px] w-[65px]">Spectra3</span>
            <div className="flex h-[21px] w-[20px] items-center justify-center rounded-[3px] border border-[#d8d8d8]">
              <S w={12} h={12}>
                <path d="M2 2L10 10M10 2L2 10" stroke="#c4c79a" strokeWidth="3" />
                <path d="M2 2L10 10M10 2L2 10" stroke="#fff" strokeWidth="1" />
              </S>
            </div>
          </div>
          <div className="ml-auto mr-[10px] flex h-[27px] w-[23px] items-center justify-center self-center rounded-[2px] border border-[#d4d4d4]">
            <S w={11} h={10}>
              <path d="M0.5 2L3 0.5L5.5 2L8 0.5L10.5 2L5.5 9Z" fill="none" stroke="#a9a46a" />
            </S>
          </div>
        </div>

        {/* toolbar */}
        <div className="flex h-[36px] shrink-0 items-center">
          <div className="ml-[12px] h-[22px] w-[2px] border-l-2 border-dotted border-[#888]" />
          <div className="ml-[10px]"><InfoIcon /></div>
          <div className="ml-[7px] flex h-[30px] w-[43px] items-center justify-center bg-[#bcd1ee]"><ZoomBox /></div>
          <div className="ml-[12px]"><ZoomH /></div>
          <div className="ml-[22px]"><ZoomV /></div>
          <div className="ml-[22px] w-[84px] whitespace-nowrap pt-[1px] text-[12.5px]">Zoom History</div>
          <div className="ml-[15px]"><Sep /></div>
          <div className="ml-[11px]"><AxDown /></div>
          <div className="ml-[10px]"><Chevron /></div>
          <div className="ml-[11px]"><AxLeft /></div>
          <div className="ml-[11px]"><Chevron /></div>
          <div className="ml-[10px]"><PointsIcon /></div>
          <div className="ml-[11px]"><Chevron /></div>
          <div className="ml-[10px]"><Sep /></div>
          <div className="ml-[17px]"><LegendGrid arrow /></div>
          <div className="ml-[24px]"><LegendGrid /></div>
          <div className="ml-[19px]"><Sep /></div>
          <div className="ml-[16px]"><ClipIcon /></div>
          <div className="ml-[23px]"><ImgIcon /></div>
          <div className="ml-[23px]"><DocsIcon /></div>
          <div className="ml-[26px]"><ArrowOut /></div>
          <div className="ml-[23px]"><WinsIcon /></div>
          <div className="ml-[20px]"><Sep /></div>
          <div className="ml-[16px]"><DocInfo /></div>
          <div className="ml-[25px]"><DocSearch /></div>
          <div className="ml-[25px]"><Undo /></div>
          <div className="ml-[24px]"><Undo flip /></div>
        </div>

        {/* chart */}
        <div className="relative h-[655px] shrink-0">
          <Chart />
          <div className="absolute left-[550px] top-[19px] w-[895px] overflow-hidden border-2 border-[#5a5a5a] bg-white px-[5px] pb-[5px] pt-[3px] font-['DejaVu_Sans',sans-serif] text-[13.5px] leading-[18.5px] tracking-[0.53px] text-[#333] shadow-[2px_2px_4px_rgba(0,0,0,0.4)]">
            {[
              { n: 1, c: "bg-[#41609f]" },
              { n: 2, c: "bg-[#f2a23c]" },
              { n: 3, c: "bg-[#e8501f]" },
              { n: 4, c: "bg-[#46969f]" },
            ].map((l) => (
              <div key={l.n} className="flex items-center whitespace-nowrap">
                <div className={`h-[2px] w-[16px] shrink-0 ${l.c}`} />
                <span className="ml-[7px]">
                  {LEGEND_NAME}
                  {l.n}
                </span>
              </div>
            ))}
          </div>
          <div className="absolute left-[1344px] top-[266px] flex h-[24px] w-[269px] items-center bg-[#cfe0f8]/20 pl-[13px] text-[13px] text-[#e9edf3]">
            <div className="h-[6px] w-[6px] rounded-full bg-[#dce6f3]" />
            <span className="ml-[16px]">Fenster ausschneiden</span>
          </div>
        </div>

        {/* status bar */}
        <div className="flex h-[26px] shrink-0 items-center border-t-2 border-[#dcdcdc] text-[13px] text-[#333]">
          <span className="ml-[4px] w-[499px]">4 Spectra</span>
          <span className="w-[249px] whitespace-pre">Position: 1104,34  |  3,728</span>
          <span className="w-[188px]">open file(s): 0 sec</span>
          <span>memory use: 82.612 K</span>
        </div>
      </div>
      <div className="h-[3px] shrink-0" />
    </div>
  );
}
